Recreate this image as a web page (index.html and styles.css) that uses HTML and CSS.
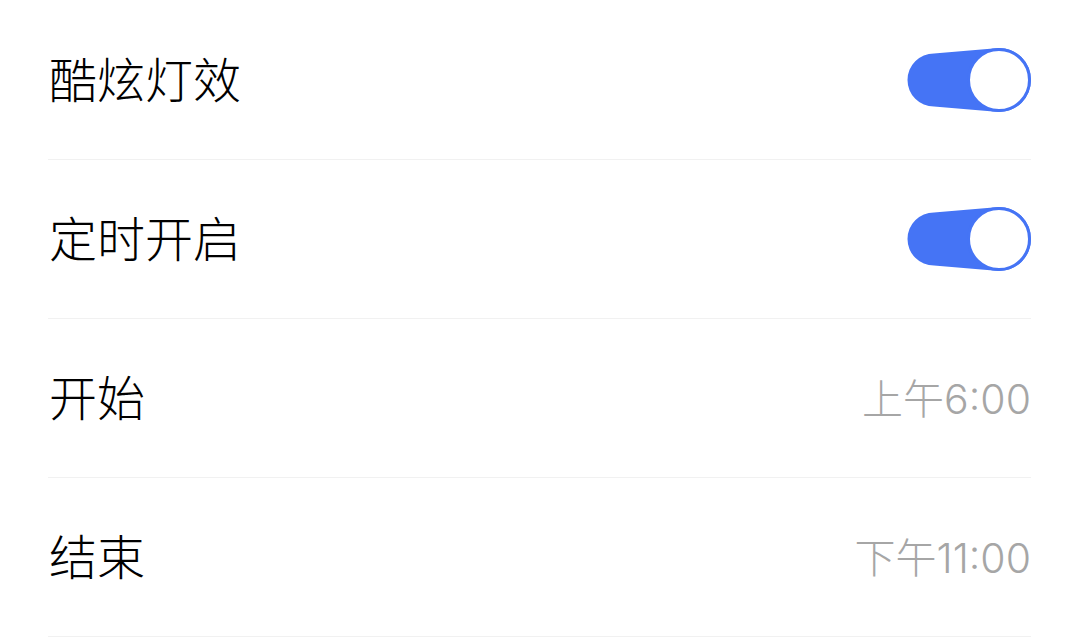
FILE: index.html
```html
<!DOCTYPE html>
<html lang="zh">
<head>
    <meta charset="UTF-8">
    <meta name="viewport" content="width=device-width, initial-scale=1.0">
    <title>灯效设置</title>
    <link rel="stylesheet" href="styles.css">
</head>
<body>
    <div class="list">
        <div class="row">
            <span class="label">酷炫灯效</span>
            <svg class="switch" width="128" height="68" viewBox="0 0 128 68">
                <path d="M30 7.5 L95 2 A32 32 0 0 1 95 66 L30 60.5 A26.5 26.5 0 0 1 30 7.5 Z" fill="#4574f5"/>
                <circle cx="95" cy="34" r="30.5" fill="#fff" stroke="#4574f5" stroke-width="3"/>
            </svg>
        </div>
        <div class="row">
            <span class="label">定时开启</span>
            <svg class="switch" width="128" height="68" viewBox="0 0 128 68">
                <path d="M30 7.5 L95 2 A32 32 0 0 1 95 66 L30 60.5 A26.5 26.5 0 0 1 30 7.5 Z" fill="#4574f5"/>
                <circle cx="95" cy="34" r="30.5" fill="#fff" stroke="#4574f5" stroke-width="3"/>
            </svg>
        </div>
        <div class="row">
            <span class="label">开始</span>
            <span class="value">上午6:00</span>
        </div>
        <div class="row">
            <span class="label">结束</span>
            <span class="value">下午11:00</span>
        </div>
    </div>
</body>
</html>
```

FILE: styles.css
```css
body {
    margin: 0;
    background-color: #fff;
    font-family: "Noto Sans CJK SC", "Noto Sans", sans-serif;
    color: #000;
}

.list {
    padding: 1px 48px 0 48px;
}

.row {
    display: flex;
    align-items: center;
    justify-content: space-between;
    height: 158px;
    border-bottom: 1.5px solid #f1f1f1;
}

.label {
    font-size: 48px;
    font-weight: 300;
    line-height: 1;
    padding-left: 1px;
    padding-bottom: 6px;
}

.value {
    font-size: 41px;
    font-weight: 300;
    line-height: 1;
    color: #a6a6a6;
    font-family: "Inter", "Noto Sans CJK SC", sans-serif;
    padding-top: 3px;
}

.switch {
    display: block;
    margin-right: -1px;
}
```
